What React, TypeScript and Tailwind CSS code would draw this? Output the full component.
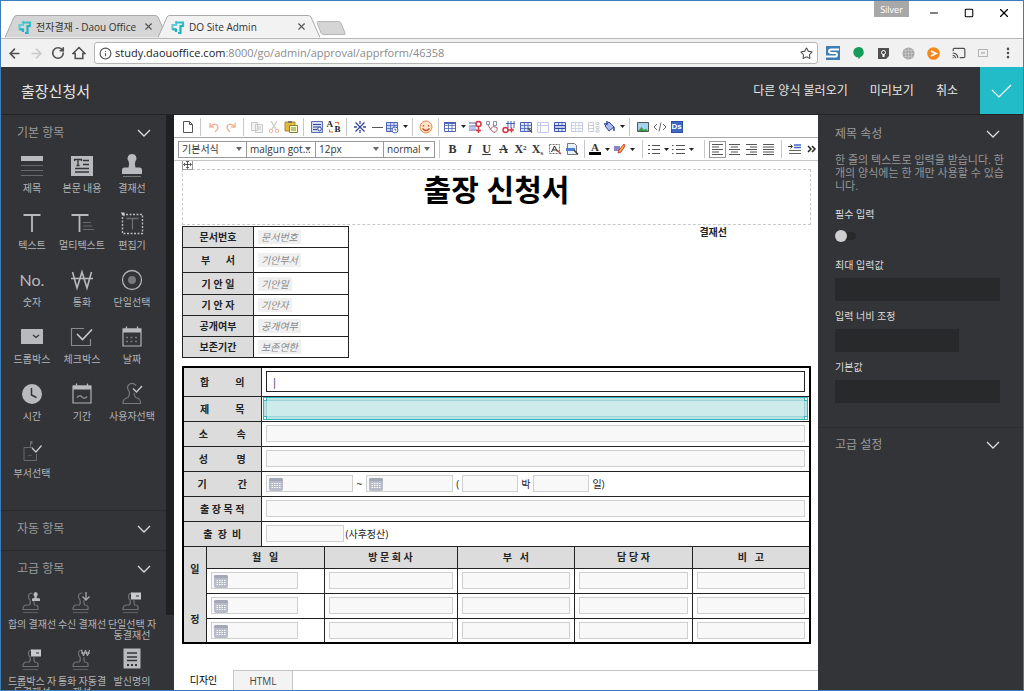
import * as React from "react"
import {
  ArrowLeft,
  ArrowRight,
  Cast,
  EllipsisVertical,
  Info,
  Minus,
  RotateCw,
  Square,
  Star,
  X,
} from "lucide-react"

type SvgProps = { w?: number; h?: number; className?: string; children: React.ReactNode }

function Svg({ w = 16, h = 16, className = "", children }: SvgProps) {
  return (
    <svg width={w} height={h} viewBox={`0 0 ${w} ${h}`} fill="none" className={`shrink-0 ${className}`} aria-hidden="true">
      {children}
    </svg>
  )
}

/* ---------- browser window ---------- */

function DaouLogo() {
  return (
    <Svg w={14} h={14}>
      <path d="M5 1v4H1.500v4H5" stroke="#5fd0d8" strokeWidth="2.200" />
      <path d="M5 2.500h7V6H9" stroke="#35bcc8" strokeWidth="2.200" />
      <path d="M1.500 9.500H5V12M12 6H9.500v7H7" stroke="#22b3c1" strokeWidth="2.200" />
    </Svg>
  )
}

function BrowserTab({ title, active }: { title: string; active?: boolean }) {
  return (
    <div className={`relative flex h-[23px] w-[162px] items-center pr-[13px] pl-[13px] ${active ? "z-10 -ml-[9px]" : ""}`}>
      <svg className="absolute inset-0 h-full w-full" viewBox="0 0 162 23" preserveAspectRatio="none" aria-hidden="true">
        <path
          d="M0 22.500 L9 2 Q10 .5 12 .5 H150 Q152 .5 153 2 L162 22.500"
          fill={active ? "#f2f2f2" : "#d5d5d5"}
          stroke="#a9a9a9"
        />
      </svg>
      <button className="relative flex min-w-0 flex-1 items-center gap-1 text-left text-[10px] leading-[14px] whitespace-nowrap text-[#333]">
        <DaouLogo />
        <span>{title}</span>
      </button>
      <button aria-label="탭 닫기" className="relative text-[#555]">
        <X size={11} strokeWidth={2.500} />
      </button>
    </div>
  )
}

function BrowserChrome() {
  return (
    <div className="shrink-0 font-['Open_Sans','Noto_Sans_CJK_KR',sans-serif]">
      <div className="flex h-[37px] items-start bg-white">
        <div className="flex items-end self-end pl-1">
          <BrowserTab title="전자결재 - Daou Office" />
          <BrowserTab title="DO Site Admin" active />
          <button aria-label="새 탭" className="-ml-1 mb-[3px]">
            <Svg w={30} h={14}>
              <path d="M1 1.500Q1 .5 3 .5H22Q24 .5 25 2L29 12Q29.500 13.500 28 13.500H8Q6 13.500 5 12Z" fill="#d5d5d5" stroke="#b5b5b5" />
            </Svg>
          </button>
        </div>
        <div className="ml-auto flex items-start">
          <button className="h-[16px] w-[35px] bg-[#a8a8a8] text-[9px] leading-[15px] text-white">Silver</button>
          <button aria-label="최소화" className="ml-[18px] grid h-[24px] w-[14px] place-items-center text-black">
            <Minus size={12} strokeWidth={2} />
          </button>
          <button aria-label="최대화" className="ml-[21px] grid h-[24px] w-[14px] place-items-center text-black">
            <Square size={10} strokeWidth={2.500} />
          </button>
          <button aria-label="닫기" className="mr-[12px] ml-[21px] grid h-[24px] w-[14px] place-items-center text-black">
            <X size={14} strokeWidth={2} />
          </button>
        </div>
      </div>
      <div className="flex h-[29px] items-center border-t border-[#b8b8b8] bg-[#f1f1f1] pr-2 pl-[6px] text-[#4f4f4f]">
        <button aria-label="뒤로" className="mr-[7px]"><ArrowLeft size={15} strokeWidth={2.500} /></button>
        <button aria-label="앞으로" className="mr-[7px] text-[#c9c9c9]"><ArrowRight size={15} strokeWidth={2.500} /></button>
        <button aria-label="새로고침" className="mr-[7px]"><RotateCw size={14} strokeWidth={2.800} /></button>
        <button aria-label="홈" className="mr-2">
          <Svg w={14} h={14}><path d="M1 7.500L7 1.500l6 6h-2.200v5H3.200v-5z" stroke="#4f4f4f" strokeWidth="1.500" /></Svg>
        </button>
        <div className="flex h-[22px] flex-1 items-center rounded-[3px] border border-[#b5b5b5] bg-white px-1">
          <Info size={13} strokeWidth={2} />
          <a href="#form" className="ml-[3px] flex-1 text-[11px] leading-[16px] whitespace-nowrap text-[#8a8a8a]">
            <span className="text-[#222]">study.daouoffice.com</span>:8000/go/admin/approval/apprform/46358
          </a>
          <button aria-label="북마크"><Star size={13} strokeWidth={2} /></button>
        </div>
        <div className="ml-2 flex items-center gap-[12px]">
          <Svg w={14} h={14}>
            <path d="M0 0h14v14H0z" fill="#3d7fb5" />
            <path d="M13 3.500H5.500Q3 3.500 3 5.200T5.500 7H9q2 0 2 1.800T9 10.500H0" stroke="#fff" strokeWidth="2" />
          </Svg>
          <Svg w={13} h={14}>
            <path d="M6.500 1a5.200 5.200 0 0 1 2 10L6.500 13.500V11.400A5.200 5.200 0 0 1 6.500 1Z" fill="#169c58" />
          </Svg>
          <Svg w={13} h={13}>
            <path d="M1 1h11v8l-3 3H1z" fill="#505050" />
            <circle cx="6.500" cy="5.500" r="2" stroke="#fff" />
            <path d="M6.500 7v3" stroke="#fff" strokeWidth="2" />
          </Svg>
          <Svg w={13} h={13}>
            <circle cx="6.500" cy="6.500" r="6" fill="#a5a5a5" />
            <path d="M.5 6.500h12M2 3.500h9M2 9.500h9M6.500.5v12M4 1.500Q2.500 6.500 4 11.500M9 1.500Q10.500 6.500 9 11.500" stroke="#c9c9c9" strokeWidth=".7" />
          </Svg>
          <Svg w={13} h={13}>
            <circle cx="6.500" cy="6.500" r="6.300" fill="#f5871f" />
            <path d="M4 4l5 2.500L4 9" stroke="#fff" strokeWidth="1.800" />
          </Svg>
          <Cast size={14} strokeWidth={2} />
          <Svg w={11} h={9}>
            <rect x=".5" y=".5" width="9" height="7" stroke="#b5b5b5" />
            <path d="M3 4h4" stroke="#999" />
          </Svg>
          <button aria-label="메뉴"><EllipsisVertical size={14} strokeWidth={2.500} /></button>
        </div>
      </div>
    </div>
  )
}

/* ---------- left palette ---------- */

function StampBase({ children }: { children?: React.ReactNode }) {
  return (
    <Svg w={28} h={28}>
      <path d="M14.500 5Q10.500 5 10.500 8.500Q10.500 10.500 12 12Q13 14.500 11.500 17H8Q5 17.500 5 21.500H20V19Q20 17 16.500 17Q15.500 14 16 12" stroke="#6f7072" strokeWidth="1.200" />
      <path d="M5 24.500h15" stroke="#5b5c5e" strokeWidth="1.200" />
      {children}
    </Svg>
  )
}

const icons: Record<string, React.ReactNode> = {
  title: (
    <Svg w={28} h={28}>
      <path d="M3 4h22v5H3z" fill="#b9babc" />
      <path d="M3 13.500h22M3 18.500h22M3 23.500h22" stroke="#68696b" />
    </Svg>
  ),
  body: (
    <Svg w={28} h={28}>
      <path d="M3 4h22v20H3z" fill="#b9babc" />
      <path d="M6.500 9V7.500h7V9M10 7.500v6M8.500 13.500h3M15 8.500h6M15 12.500h6M7 16.500h14M7 20h14" stroke="#333437" strokeWidth="1.300" />
    </Svg>
  ),
  stamp: (
    <Svg w={28} h={28}>
      <path d="M14 2a4.300 4.300 0 0 1 3.500 7q-1.300 3 0 6.500H22q2 0 2 2.500v4H4v-4q0-2.500 2-2.500h4.500q1.300-3.500 0-6.500A4.300 4.300 0 0 1 14 2Z" fill="#b9babc" />
      <path d="M5 24.500h18" stroke="#77787a" />
    </Svg>
  ),
  text: <Svg w={28} h={28}><path d="M5.500 6h17M14 6v17" stroke="#b9babc" strokeWidth="1.800" /></Svg>,
  multi: (
    <Svg w={28} h={28}>
      <path d="M3.500 6h17M11.500 6v17" stroke="#b9babc" strokeWidth="1.800" />
      <path d="M15 13.500h8M15 17h9M15 20.500h11" stroke="#68696b" />
    </Svg>
  ),
  editor: (
    <Svg w={28} h={28}>
      <path d="M4.500 5.500h20v19h-20z" stroke="#b9babc" strokeDasharray="2 1.500" strokeWidth="1.400" />
      <path d="M8.500 9.500h12M14.500 9.500v11" stroke="#6d6e70" strokeWidth="1.300" />
      <path d="M2.500 3.500h4v4z" fill="#d0d0d0" />
    </Svg>
  ),
  number: <span className="font-['Lato',sans-serif] text-[16px] leading-[28px] text-[#b9babc]">No.</span>,
  won: (
    <Svg w={28} h={28}>
      <path d="M4.500 6l4.500 16L14 6l5 16L23.500 6M3 12.500h22" stroke="#b9babc" strokeWidth="1.600" />
    </Svg>
  ),
  radio: (
    <Svg w={28} h={28}>
      <circle cx="14" cy="14" r="9.500" stroke="#b0b1b3" strokeWidth="1.300" />
      <circle cx="14" cy="14" r="4" fill="#77787a" />
    </Svg>
  ),
  dropdown: (
    <Svg w={28} h={28}>
      <path d="M3 6h22v15H3z" fill="#b9babc" />
      <path d="M15 12l3 2.500 3-2.500" stroke="#333437" strokeWidth="1.300" />
    </Svg>
  ),
  check: (
    <Svg w={28} h={28}>
      <path d="M16 5.500H3.500v17h19V16" stroke="#88898b" strokeWidth="1.200" />
      <path d="M9 11l5.500 5.500L24 6.500" stroke="#c9cacc" strokeWidth="1.600" />
    </Svg>
  ),
  date: (
    <Svg w={28} h={28}>
      <path d="M5 6h18v17H5z" stroke="#b0b1b3" strokeWidth="1.200" />
      <path d="M5 7.500h18" stroke="#b9babc" strokeWidth="4" />
      <path d="M8.500 3.500v3M19.500 3.500v3" stroke="#b9babc" strokeWidth="1.300" />
      <path d="M8 14.500h13M8 18.500h13" stroke="#77787a" strokeWidth="1.500" strokeDasharray="2 2.500" />
    </Svg>
  ),
  time: (
    <Svg w={28} h={28}>
      <circle cx="14" cy="14" r="10" fill="#b9babc" />
      <path d="M13.500 8v7l5 2.500" stroke="#333437" strokeWidth="1.500" />
    </Svg>
  ),
  period: (
    <Svg w={28} h={28}>
      <path d="M5 6h18v17H5z" stroke="#b0b1b3" strokeWidth="1.200" />
      <path d="M5 7.500h18" stroke="#b9babc" strokeWidth="4" />
      <path d="M8.500 3.500v3M19.500 3.500v3" stroke="#b9babc" strokeWidth="1.300" />
      <path d="M9 17.500q2.500-3 5-.5t5-.5" stroke="#88898b" strokeWidth="1.500" />
    </Svg>
  ),
  user: (
    <Svg w={28} h={28}>
      <path d="M18 5.500Q15 2 11 4.500Q8 7.500 11 11Q12.500 14 10 17.500Q5 18.500 5 23.500H22.500Q23 18.500 17.500 17.500Q15.500 15 16.500 13" stroke="#77787a" strokeWidth="1.200" />
      <path d="M15 8.500l3.500 3.500L24 6" stroke="#c9cacc" strokeWidth="1.300" />
    </Svg>
  ),
  dept: (
    <Svg w={28} h={28}>
      <path d="M15 10.500H6v13h12.500V17M12.500 10V7" stroke="#6a6b6d" />
      <path d="M12 4h2.500v3H12z" fill="#6a6b6d" />
      <path d="M10 18.500h4" stroke="#505153" />
      <path d="M14 11l4 4 5.500-6.500" stroke="#c9cacc" strokeWidth="1.300" />
    </Svg>
  ),
  stampUser: (
    <StampBase><path d="M17.500 4a2.500 2.500 0 0 1 1.200 4.500v1.500L22 10.500v2.500h-8v-2.500l2.500-.5V8.500A2.500 2.500 0 0 1 17.500 4Z" fill="#b9babc" /></StampBase>
  ),
  stampDown: <StampBase><path d="M18 4v8M14.500 8.500L18 12l3.500-3.500" stroke="#a9aaac" strokeWidth="1.300" /></StampBase>,
  stampBox: (
    <StampBase>
      <path d="M13 4.500h10v7H13z" fill="#c9cacc" />
      <path d="M18 8h3" stroke="#333437" />
    </StampBase>
  ),
  stampWon: <StampBase><path d="M13.500 5l2 6 2-6 2 6 2-6M13 8h9" stroke="#b9babc" /></StampBase>,
  sender: (
    <Svg w={28} h={28}>
      <path d="M5.500 3.500h17v20h-17z" fill="#b9babc" />
      <path d="M9 8h10M9 12h10M9 15.500h10" stroke="#333437" strokeWidth="1.500" />
      <path d="M9 20h10" stroke="#333437" strokeWidth="2" strokeDasharray="2 2" />
    </Svg>
  ),
}

const basicItems = [
  ["title", "제목"], ["body", "본문 내용"], ["stamp", "결재선"],
  ["text", "텍스트"], ["multi", "멀티텍스트"], ["editor", "편집기"],
  ["number", "숫자"], ["won", "통화"], ["radio", "단일선택"],
  ["dropdown", "드롭박스"], ["check", "체크박스"], ["date", "날짜"],
  ["time", "시간"], ["period", "기간"], ["user", "사용자선택"],
  ["dept", "부서선택"],
]

const advancedItems = [
  ["stampUser", "합의 결재선"], ["stampDown", "수신 결재선"], ["stampBox", "단일선택 자동결재선"],
  ["stampBox", "드롭박스 자동결재선"], ["stampWon", "통화 자동결재선"], ["sender", "발신명의"],
]

function Chevron() {
  return <Svg w={14} h={8}><path d="M1 1l6 6 6-6" stroke="#dcdcdc" strokeWidth="1.300" /></Svg>
}

function SectionHeader({ title }: { title: string }) {
  return (
    <button className="flex h-[36px] w-full items-center justify-between pr-[15px] pl-[16px] text-[12px] leading-[16px] text-[#9a9b9d]">
      {title}
      <Chevron />
    </button>
  )
}

function ItemGrid({ items }: { items: string[][] }) {
  return (
    <div className="grid grid-cols-3 pr-[9px] pl-[6px] font-['Noto_Sans_CJK_KR',sans-serif]">
      {items.map(([icon, label]) => (
        <button key={label} className="flex h-[57px] flex-col items-center pt-px text-[10px] text-[#b4b5b7]">
          <span className="flex h-[28px] items-center justify-center">{icons[icon]}</span>
          <span className="mt-[2px] w-full text-center leading-[11px] break-all">{label}</span>
        </button>
      ))}
    </div>
  )
}

function Palette() {
  return (
    <aside className="flex w-[173px] shrink-0 overflow-hidden bg-[#333437]">
      <div className="flex-1">
        <section className="border-b border-[#2a2b2d] pb-[17px]">
          <SectionHeader title="기본 항목" />
          <ItemGrid items={basicItems} />
        </section>
        <section className="border-b border-[#2a2b2d] pb-[3px]">
          <SectionHeader title="자동 항목" />
        </section>
        <section>
          <SectionHeader title="고급 항목" />
          <ItemGrid items={advancedItems} />
        </section>
      </div>
      <div className="h-[87%] w-2 bg-[#1f2022]" />
    </aside>
  )
}

/* ---------- editor toolbar ---------- */

function Sep() {
  return <span className="mx-1 h-[18px] w-px shrink-0 bg-[#c8c8c8]" />
}

function Caret() {
  return <Svg w={5} h={3} className="ml-1"><path d="M0 0h5L2.500 3z" fill="#222" /></Svg>
}

type ToolProps = { name: string; caret?: boolean; boxed?: boolean; children: React.ReactNode }

function Tool({ name, caret, boxed, children }: ToolProps) {
  return (
    <button
      aria-label={name}
      className={`flex h-[17px] min-w-[17px] shrink-0 items-center justify-center text-[#333] ${boxed ? "border border-[#999]" : ""}`}
    >
      {children}
      {caret && <Caret />}
    </button>
  )
}

function TableGlyph({ color = "#4b63b8", fill = "#fff", children }: { color?: string; fill?: string; children?: React.ReactNode }) {
  return (
    <Svg w={14} h={14}>
      <path d="M1.500 2.500h11v9h-11z" fill={fill} stroke={color} />
      <path d="M1.500 5.500h11M1.500 8.500h11M5.500 2.500v9M9 2.500v9" stroke={color} strokeWidth=".8" />
      {children}
    </Svg>
  )
}

function Lines({ d }: { d: string }) {
  return <Svg w={13} h={13}><path d={d} stroke="#555" strokeWidth="1.200" /></Svg>
}

function ToolSelect({ name, value, className }: { name: string; value: string; className: string }) {
  return (
    <span className={`relative -ml-px flex h-[17px] shrink-0 items-center border border-[#999] ${className}`}>
      <select
        aria-label={name}
        defaultValue={value}
        className="w-full appearance-none bg-transparent pl-[3px] font-['Open_Sans','Noto_Sans_CJK_KR',sans-serif] text-[10px] leading-[15px] text-[#333]"
      >
        <option>{value}</option>
      </select>
      <Svg w={6} h={4} className="pointer-events-none absolute right-[4px]"><path d="M0 0h6L3 4z" fill="#666" /></Svg>
    </span>
  )
}

function EditorToolbar() {
  return (
    <div className="shrink-0 overflow-hidden bg-white">
      <div className="flex h-[23px] items-center border-b border-[#a8a8a8] pt-px pl-[5px]">
        <Tool name="새 문서"><Svg w={12} h={14}><path d="M1.500 1.500h6l3 3v8h-9zM7.500 1.500v3h3" stroke="#555" /></Svg></Tool>
        <Sep />
        <Tool name="실행 취소"><Svg w={14} h={14}><path d="M3 3v4h4M3 7q4-4 7-2 2.500 3-2 7" stroke="#f0b79b" strokeWidth="1.500" /></Svg></Tool>
        <Tool name="다시 실행"><Svg w={14} h={14}><path d="M11 3v4H7M11 7Q7 3 4 5q-2.500 3 2 7" stroke="#f0b79b" strokeWidth="1.500" /></Svg></Tool>
        <Sep />
        <Tool name="복사"><Svg w={14} h={14}><path d="M1.500 2.500h6v8h-6zM5.500 4.500h7v8h-7zM7 7h4M7 9h4" stroke="#c9c9c9" fill="#f3f3f3" /></Svg></Tool>
        <Tool name="잘라내기">
          <Svg w={14} h={14}>
            <path d="M4 1l5 8M10 1L5 9" stroke="#c9c9c9" strokeWidth="1.300" />
            <circle cx="4" cy="11" r="1.800" stroke="#efb3a5" /><circle cx="10" cy="11" r="1.800" stroke="#efb3a5" />
          </Svg>
        </Tool>
        <Tool name="붙여넣기">
          <Svg w={14} h={14}>
            <path d="M1 2h10v9H1z" fill="#e5b93c" stroke="#9c7a1b" strokeWidth=".8" />
            <path d="M4 1h4v2H4z" fill="#777" />
            <path d="M5.500 5.500h8v7h-8z" fill="#fff6c9" stroke="#7a8a3c" />
            <path d="M7 8h5M7 10h5" stroke="#7a8a3c" />
          </Svg>
        </Tool>
        <Sep />
        <Tool name="찾기">
          <Svg w={14} h={14}>
            <path d="M1.500 1.500h11v11h-11z" fill="#d5dcf5" stroke="#5a6fb5" />
            <path d="M3 4.500h8M3 7h8M3 9.500h4" stroke="#33499c" />
            <circle cx="9.500" cy="9" r="1.800" fill="#fff" stroke="#33499c" />
          </Svg>
        </Tool>
        <Tool name="바꾸기">
          <span className="relative h-[14px] w-[14px] font-['Liberation_Serif',serif] text-[9px] leading-[9px] font-bold text-[#222]">
            <span className="absolute top-0 left-0">A</span>
            <span className="absolute right-0 bottom-0">B</span>
            <Svg w={14} h={14} className="absolute inset-0"><path d="M8 2.500h3.500v2M6 12H2.500V9.500" stroke="#e0662b" /></Svg>
          </span>
        </Tool>
        <Sep />
        <Tool name="특수문자"><Svg w={12} h={12}><path d="M1.500 1.500l9 9M10.500 1.500l-9 9M6 0v3M6 9v3M0 6h3M9 6h3" stroke="#33499c" strokeWidth="1.300" /></Svg></Tool>
        <Tool name="가로줄"><Svg w={12} h={12}><path d="M1 6.500h11" stroke="#555" /></Svg></Tool>
        <Tool name="날짜/시간" caret>
          <TableGlyph fill="#cdd7f5"><circle cx="10" cy="10" r="3" fill="#fff" stroke="#4b63b8" /><path d="M10 8.500V10h1.500" stroke="#333" strokeWidth=".8" /></TableGlyph>
        </Tool>
        <Sep />
        <Tool name="이모티콘">
          <Svg w={14} h={14}>
            <circle cx="7" cy="7" r="6" fill="#fde3c8" stroke="#e58a4a" />
            <path d="M4.500 5v1.500M9.500 5v1.500M3.500 8.500q3.500 4 7 0" stroke="#c95427" strokeWidth="1.300" />
          </Svg>
        </Tool>
        <Sep />
        <Tool name="표" caret><TableGlyph><path d="M1 2h12v2H1z" fill="#4b63b8" /></TableGlyph></Tool>
        <Tool name="행 삭제"><Svg w={14} h={14}><path d="M1 3h8M1 6h8M1 10h8" stroke="#4b63b8" /><path d="M1 7h7v2H1z" fill="#b9c5ee" /><circle cx="10.500" cy="4" r="2.500" stroke="#d9333f" strokeWidth="1.500" /><path d="M10.500 6.500V13M8 10.500h5" stroke="#d9333f" strokeWidth="1.500" /></Svg></Tool>
        <Tool name="셀 병합"><Svg w={14} h={14}><path d="M1.500 1.500h3v3h-3zM8.500 1.500h3v4h-3z" stroke="#8a8fb0" /><path d="M3 5q3 6 6 7.500 4-1 3-5l-4-1-3 3" stroke="#a0606a" /></Svg></Tool>
        <Tool name="열 삭제"><Svg w={14} h={14}><path d="M6 1v7M9 1v7M12 1v7M4 3.500h9" stroke="#4b63b8" /><circle cx="3.500" cy="10" r="2.500" stroke="#d9333f" strokeWidth="1.500" /><path d="M6 10h6M9.500 7.500v5" stroke="#d9333f" strokeWidth="1.500" /></Svg></Tool>
        <Tool name="표 속성"><TableGlyph fill="#dfe4f5"><path d="M9 8l4 4.500" stroke="#555" strokeWidth="1.500" /></TableGlyph></Tool>
        <Tool name="셀 속성"><Svg w={14} h={14}><path d="M1.500 2.500h11v10h-11zM4.500 2.500v10M1.500 5.500h11" stroke="#c3cbe8" /></Svg></Tool>
        <Tool name="행 속성"><TableGlyph color="#3f58b5" fill="#e4e9fa"><path d="M1.500 5.500h11v3h-11z" stroke="#2d47a5" fill="#b9c5ee" /></TableGlyph></Tool>
        <Tool name="셀 나누기"><TableGlyph color="#c3cbe8" /></Tool>
        <Tool name="열 나누기"><Svg w={14} h={14}><path d="M1.500 2.500h5v9h-5zM1.500 5.500h5M1.500 8.500h5M9 2.500h3v2H9zM9 6.500h3v2H9zM9 10h3v2H9z" stroke="#c9cbd8" /></Svg></Tool>
        <Tool name="셀 배경색" caret>
          <Svg w={14} h={14}><path d="M3 6l4-4 5 5-5 4z" fill="#a9b8ee" stroke="#33499c" /><path d="M2 4h3V1M12 7v4" stroke="#33499c" strokeWidth="1.500" /></Svg>
        </Tool>
        <Sep />
        <Tool name="이미지"><Svg w={14} h={14}><path d="M1.500 2.500h11v9h-11z" fill="#a5d3ef" stroke="#555" /><path d="M2 11l3.500-4 2.500 3 2-1.500L12 11z" fill="#3c9a4b" /></Svg></Tool>
        <Tool name="소스"><Svg w={14} h={14}><path d="M4 4L1 7l3 3M10 4l3 3-3 3M8 2.500L6 11.500" stroke="#666" /></Svg></Tool>
        <Tool name="Ds"><span className="grid h-[12px] w-[12px] place-items-center border border-[#2b50a8] bg-[#3f68c5] font-['Liberation_Sans',sans-serif] text-[8px] leading-[9px] font-bold text-white">Ds</span></Tool>
      </div>

      <div className="flex h-[23px] items-center border-b border-[#c5c5c5] pl-[5px]">
        <ToolSelect name="문단 서식" value="기본서식" className="w-[69px]" />
        <ToolSelect name="글꼴" value="malgun got..." className="w-[70px]" />
        <ToolSelect name="글자 크기" value="12px" className="w-[69px]" />
        <ToolSelect name="줄 간격" value="normal" className="w-[52px]" />
        <Sep />
        <div className="flex font-['Liberation_Serif',serif] text-[12px] leading-[14px] font-bold">
          <Tool name="굵게">B</Tool>
          <Tool name="기울임"><i>I</i></Tool>
          <Tool name="밑줄"><u>U</u></Tool>
          <Tool name="취소선"><s>A</s></Tool>
          <Tool name="위 첨자"><span>X<sup className="text-[7px]">2</sup></span></Tool>
          <Tool name="아래 첨자"><span>X<sub className="text-[7px]">s</sub></span></Tool>
        </div>
        <Tool name="서식 지우기"><Svg w={14} h={14}><path d="M1.500 2.500h10v9h-10z" stroke="#777" strokeDasharray="2 1" /><path d="M3.500 10l3-6 3 6M5 8h3" stroke="#222" /><path d="M9 8l4 4" stroke="#b55" strokeWidth="1.500" /></Svg></Tool>
        <Tool name="CSS"><Svg w={14} h={14}><path d="M2.500 1.500h7l2 2v9h-9z" fill="#eaf0fb" stroke="#777" /><path d="M1 6h9v3H1z" fill="#4f7fcf" /><path d="M9 8l4 4.500" stroke="#444" strokeWidth="1.500" /></Svg></Tool>
        <Sep />
        <div className="flex gap-[3px] pr-[3px]">
          <Tool name="글자색" caret><span className="border-b-[3px] border-black px-[2px] font-['Liberation_Serif',serif] text-[11px] leading-[9px] font-bold">A</span></Tool>
          <Tool name="배경색" caret><Svg w={13} h={12}><path d="M1 3h6v5H1z" fill="#8c86c9" /><path d="M11 1L6 7l-1 3 3-1 4-6z" fill="#f2b23a" stroke="#c9403a" /></Svg></Tool>
        </div>
        <Sep />
        <div className="flex gap-[3px] pr-[6px]">
          <Tool name="번호 목록" caret><Lines d="M1 2.500h2M1 6.500h2M1 10.500h2M5 2.500h8M5 6.500h8M5 10.500h8" /></Tool>
          <Tool name="글머리 목록" caret><Lines d="M0 2.500h1.500M0 6.500h1.500M0 10.500h1.500M4 2.500h9M4 6.500h9M4 10.500h9" /></Tool>
        </div>
        <Sep />
        <Tool name="왼쪽 정렬" boxed><Lines d="M1 1.500h11M1 4h7M1 6.500h11M1 9h7M1 11.500h11" /></Tool>
        <Tool name="가운데 정렬"><Lines d="M1 1.500h11M3 4h7M1 6.500h11M3 9h7M1 11.500h11" /></Tool>
        <Tool name="오른쪽 정렬"><Lines d="M1 1.500h11M5 4h7M1 6.500h11M5 9h7M1 11.500h11" /></Tool>
        <Tool name="양쪽 정렬"><Lines d="M1 1.500h11M1 4h11M1 6.500h11M1 9h11M1 11.500h11" /></Tool>
        <Sep />
        <Tool name="들여쓰기"><Svg w={13} h={12}><path d="M6 2h7M6 4.500h7" stroke="#3f68c5" strokeWidth="1.500" /><path d="M1 7.500h12M1 10.500h12" stroke="#666" /><path d="M0 3.500h4M2.500 1.500l2 2-2 2" stroke="#333" /></Svg></Tool>
        <Tool name="더 보기"><Svg w={9} h={8}><path d="M1 1l3 3-3 3M5 1l3 3-3 3" stroke="#222" strokeWidth="1.500" /></Svg></Tool>
      </div>
    </div>
  )
}

/* ---------- form ---------- */

const infoRows = [
  { label: "문서번호", value: "문서번호", height: "h-[21px]" },
  { label: "부      서", value: "기안부서", height: "h-[25px]" },
  { label: "기 안 일", value: "기안일", height: "h-[22px]" },
  { label: "기 안 자", value: "기안자", height: "h-[21px]" },
  { label: "공개여부", value: "공개여부", height: "h-[21px]" },
  { label: "보존기간", value: "보존연한", height: "h-[21px]" },
]

function HeadCell({ children, ...rest }: React.ComponentProps<"th">) {
  return (
    <th {...rest} className="border border-[#222] bg-[#dcdcdc] p-0 text-center text-[10px] leading-[14px] font-bold whitespace-pre">
      {children}
    </th>
  )
}

function Field({ name, className = "w-full" }: { name: string; className?: string }) {
  return <input aria-label={name} className={`block h-[17px] shrink-0 border border-[#cfcfcf] bg-[#f8f8f8] px-1 text-[10px] ${className}`} />
}

function DateField({ name }: { name: string }) {
  return (
    <span className="relative block w-[87px] shrink-0">
      <Field name={name} />
      <Svg w={14} h={14} className="pointer-events-none absolute top-[2px] left-[3px]">
        <rect y="1" width="14" height="13" rx="2" fill="#b8bcc8" />
        <path d="M0 3q0-2 2-2h10q2 0 2 2v1H0z" fill="#a3a8b6" />
        <path d="M2.500 6.500h9M2.500 8.500h9M2.500 10.500h9" stroke="#fff" strokeDasharray="1.500 1" />
      </Svg>
    </span>
  )
}

function Handle({ className }: { className: string }) {
  return <span className={`absolute h-1 w-1 border border-[#35b5bd] bg-white ${className}`} />
}

function FormTable() {
  return (
    <table className="mt-[8px] w-full table-fixed border-collapse border-2 border-black text-[10px] leading-[14px]">
      <colgroup>
        <col className="w-[23px]" />
        <col className="w-[55px]" />
        <col className="w-[63px]" />
        <col className="w-[133px]" />
        <col />
        <col />
        <col />
      </colgroup>
      <tbody>
        <tr className="h-[29px]">
          <HeadCell colSpan={2}>{"합          의"}</HeadCell>
          <td colSpan={5} className="border border-[#222] px-1 py-0">
            <input aria-label="합의" defaultValue="|" className="block h-[21px] w-full border border-[#222] bg-white px-[5px] text-[11px] text-[#336]" />
          </td>
        </tr>
        <tr className="h-[25px]">
          <HeadCell colSpan={2}>{"제          목"}</HeadCell>
          <td colSpan={5} className="border border-[#222] px-px py-0">
            <div className="relative border border-[#35b5bd] bg-[#b9e2e3] p-[2px]">
              <input aria-label="제목" className="block h-[17px] w-full border border-[#9fd3d5] bg-[#cdebeb] px-1" />
              <Handle className="-top-px -left-px" />
              <Handle className="-top-px -right-px" />
              <Handle className="-bottom-px -left-px" />
              <Handle className="-right-px -bottom-px" />
            </div>
          </td>
        </tr>
        <tr className="h-[25px]">
          <HeadCell colSpan={2}>{"소           속"}</HeadCell>
          <td colSpan={5} className="border border-[#222] px-1 py-0"><Field name="소속" /></td>
        </tr>
        <tr className="h-[25px]">
          <HeadCell colSpan={2}>{"성           명"}</HeadCell>
          <td colSpan={5} className="border border-[#222] px-1 py-0"><Field name="성명" /></td>
        </tr>
        <tr className="h-[25px]">
          <HeadCell colSpan={2}>{"기            간"}</HeadCell>
          <td colSpan={5} className="border border-[#222] px-1 py-0">
            <div className="flex items-center gap-[3px]">
              <DateField name="시작일" />
              <span className="px-px">~</span>
              <DateField name="종료일" />
              <span>(</span>
              <Field name="박" className="w-[56px]" />
              <span>박</span>
              <Field name="일" className="w-[56px]" />
              <span>일)</span>
            </div>
          </td>
        </tr>
        <tr className="h-[25px]">
          <HeadCell colSpan={2}>출 장 목 적</HeadCell>
          <td colSpan={5} className="border border-[#222] px-1 py-0"><Field name="출장목적" /></td>
        </tr>
        <tr className="h-[25px]">
          <HeadCell colSpan={2}>{"출  장  비"}</HeadCell>
          <td colSpan={5} className="border border-[#222] px-1 py-0">
            <div className="flex items-center gap-[2px]">
              <Field name="출장비" className="w-[78px]" />
              <span>(사후정산)</span>
            </div>
          </td>
        </tr>
        <tr className="h-[22px]">
          <HeadCell rowSpan={4}>
            <span className="flex flex-col items-center gap-[36px]"><span>일</span><span>정</span></span>
          </HeadCell>
          <HeadCell colSpan={2}>{"월   일"}</HeadCell>
          <HeadCell>방 문 회 사</HeadCell>
          <HeadCell>{"부   서"}</HeadCell>
          <HeadCell>담 당 자</HeadCell>
          <HeadCell>{"비   고"}</HeadCell>
        </tr>
        {[1, 2, 3].map((n) => (
          <tr key={n} className="h-[25px]">
            <td colSpan={2} className="border border-[#222] px-1 py-0"><DateField name={`월일 ${n}`} /></td>
            <td className="border border-[#222] px-1 py-0"><Field name={`방문회사 ${n}`} /></td>
            <td className="border border-[#222] px-1 py-0"><Field name={`부서 ${n}`} /></td>
            <td className="border border-[#222] px-1 py-0"><Field name={`담당자 ${n}`} /></td>
            <td className="border border-[#222] px-1 py-0"><Field name={`비고 ${n}`} /></td>
          </tr>
        ))}
      </tbody>
    </table>
  )
}

function Editor() {
  return (
    <main id="form" className="flex min-w-0 flex-1 flex-col bg-white text-[#222]">
      <EditorToolbar />
      <div className="relative min-h-0 flex-1 overflow-hidden pt-[8px] pr-[7px] pl-2">
        <button aria-label="표 이동" className="absolute top-[-2px] left-[8px] border border-[#999] bg-white">
          <Svg w={9} h={9}>
            <path d="M4.500 1v7M1 4.500h7M3 2l1.500-1.500L6 2M3 7l1.500 1.500L6 7M2 3L.5 4.500 2 6M7 3l1.500 1.500L7 6" stroke="#333" strokeWidth=".8" />
          </Svg>
        </button>
        <div className="h-[56px] border border-dashed border-[#c9c9c9]">
          <h1 className="text-center text-[30px] leading-[40px] font-bold text-black">출장 신청서</h1>
        </div>
        <div className="flex items-start">
          <table className="mt-px w-[167px] table-fixed border-collapse text-[10px] leading-[14px]">
            <colgroup>
              <col className="w-[71px]" />
              <col />
            </colgroup>
            <tbody>
              {infoRows.map((row) => (
                <tr key={row.label} className={row.height}>
                  <HeadCell>{row.label}</HeadCell>
                  <td className="border border-[#222] px-1 py-0">
                    <i className="bg-[#f0f0f0] px-[3px] text-[#8a8a8a]">{row.value}</i>
                  </td>
                </tr>
              ))}
            </tbody>
          </table>
          <p className="mr-[84px] ml-auto text-[10px] leading-[14px] font-bold">결재선</p>
        </div>
        <FormTable />
      </div>
      <div className="flex h-[20px] shrink-0 text-[10px] leading-[16px] text-[#444]">
        <button className="w-[59px] text-black">디자인</button>
        <button className="w-[60px] border border-b-0 border-[#c5c5c5] bg-[#f3f3f3]">HTML</button>
        <span className="flex-1 border-t border-[#c5c5c5]" />
      </div>
    </main>
  )
}

/* ---------- right properties ---------- */

function Property({ id, label, className }: { id: string; label: string; className: string }) {
  return (
    <div className="mb-[7px]">
      <label htmlFor={id} className="block h-[21px] text-[10px] leading-[16px] text-[#dcdcdc]">{label}</label>
      <input id={id} className={`block h-[23px] bg-[#28292b] px-2 text-[11px] text-white ${className}`} />
    </div>
  )
}

function Properties() {
  const [required, setRequired] = React.useState(false)

  return (
    <aside className="w-[205px] shrink-0 overflow-hidden bg-[#333437]">
      <section className="h-[313px] border-b border-[#2b2c2e]">
        <button className="flex h-[38px] w-full items-center justify-between pr-[23px] pl-[17px] text-[12px] leading-[16px] text-[#9a9b9d]">
          제목 속성
          <Chevron />
        </button>
        <div className="pr-[23px] pl-[17px]">
          <p className="text-[11px] leading-[13px] whitespace-nowrap text-[#96979a]">
            한 줄의 텍스트로 입력을 받습니다. 한<br />
            개의 양식에는 한 개만 사용할 수 있습<br />
            니다.
          </p>
          <label className="mt-[14px] mb-[15px] block text-[10px] leading-[16px] text-[#dcdcdc]">
            필수 입력
            <span className="relative mt-2 block h-[12px] w-[21px]">
              <input
                type="checkbox"
                checked={required}
                onChange={(e) => setRequired(e.target.checked)}
                className="absolute top-[2px] left-0 h-[8px] w-[21px] appearance-none rounded-full bg-[#28292b]"
              />
              <span className={`pointer-events-none absolute top-0 h-[12px] w-[12px] rounded-full bg-[#cfcfcf] ${required ? "right-0" : "left-0"}`} />
            </span>
          </label>
          <Property id="max" label="최대 입력값" className="w-full" />
          <Property id="width" label="입력 너비 조정" className="w-3/4" />
          <Property id="default" label="기본값" className="w-full" />
        </div>
      </section>
      <button className="flex h-[34px] w-full items-center justify-between pr-[23px] pl-[17px] text-[12px] leading-[16px] text-[#9a9b9d]">
        고급 설정
        <Chevron />
      </button>
    </aside>
  )
}

export default function App() {
  return (
    <div className="flex h-screen flex-col overflow-hidden border border-[#3d7db8] bg-[#333437] font-['Open_Sans','Noto_Sans_CJK_KR',sans-serif]">
      <BrowserChrome />
      <header className="flex h-[48px] shrink-0 items-center border-b border-[#232426] bg-[#333437] pl-[20px] text-[12px] leading-[16px] text-[#e5e5e5]">
        <h2 className="mr-auto text-[15px] leading-[20px]">출장신청서</h2>
        <button className="mr-[22px]">다른 양식 불러오기</button>
        <button className="mr-[22px]">미리보기</button>
        <button className="mr-[22px]">취소</button>
        <button aria-label="저장" className="grid h-full w-[43px] place-items-center bg-[#22bbc8]">
          <Svg w={21} h={14}><path d="M1 6l7 7L20 1" stroke="#fff" strokeWidth="1.200" /></Svg>
        </button>
      </header>
      <div className="flex min-h-0 flex-1">
        <Palette />
        <Editor />
        <Properties />
      </div>
    </div>
  )
}
